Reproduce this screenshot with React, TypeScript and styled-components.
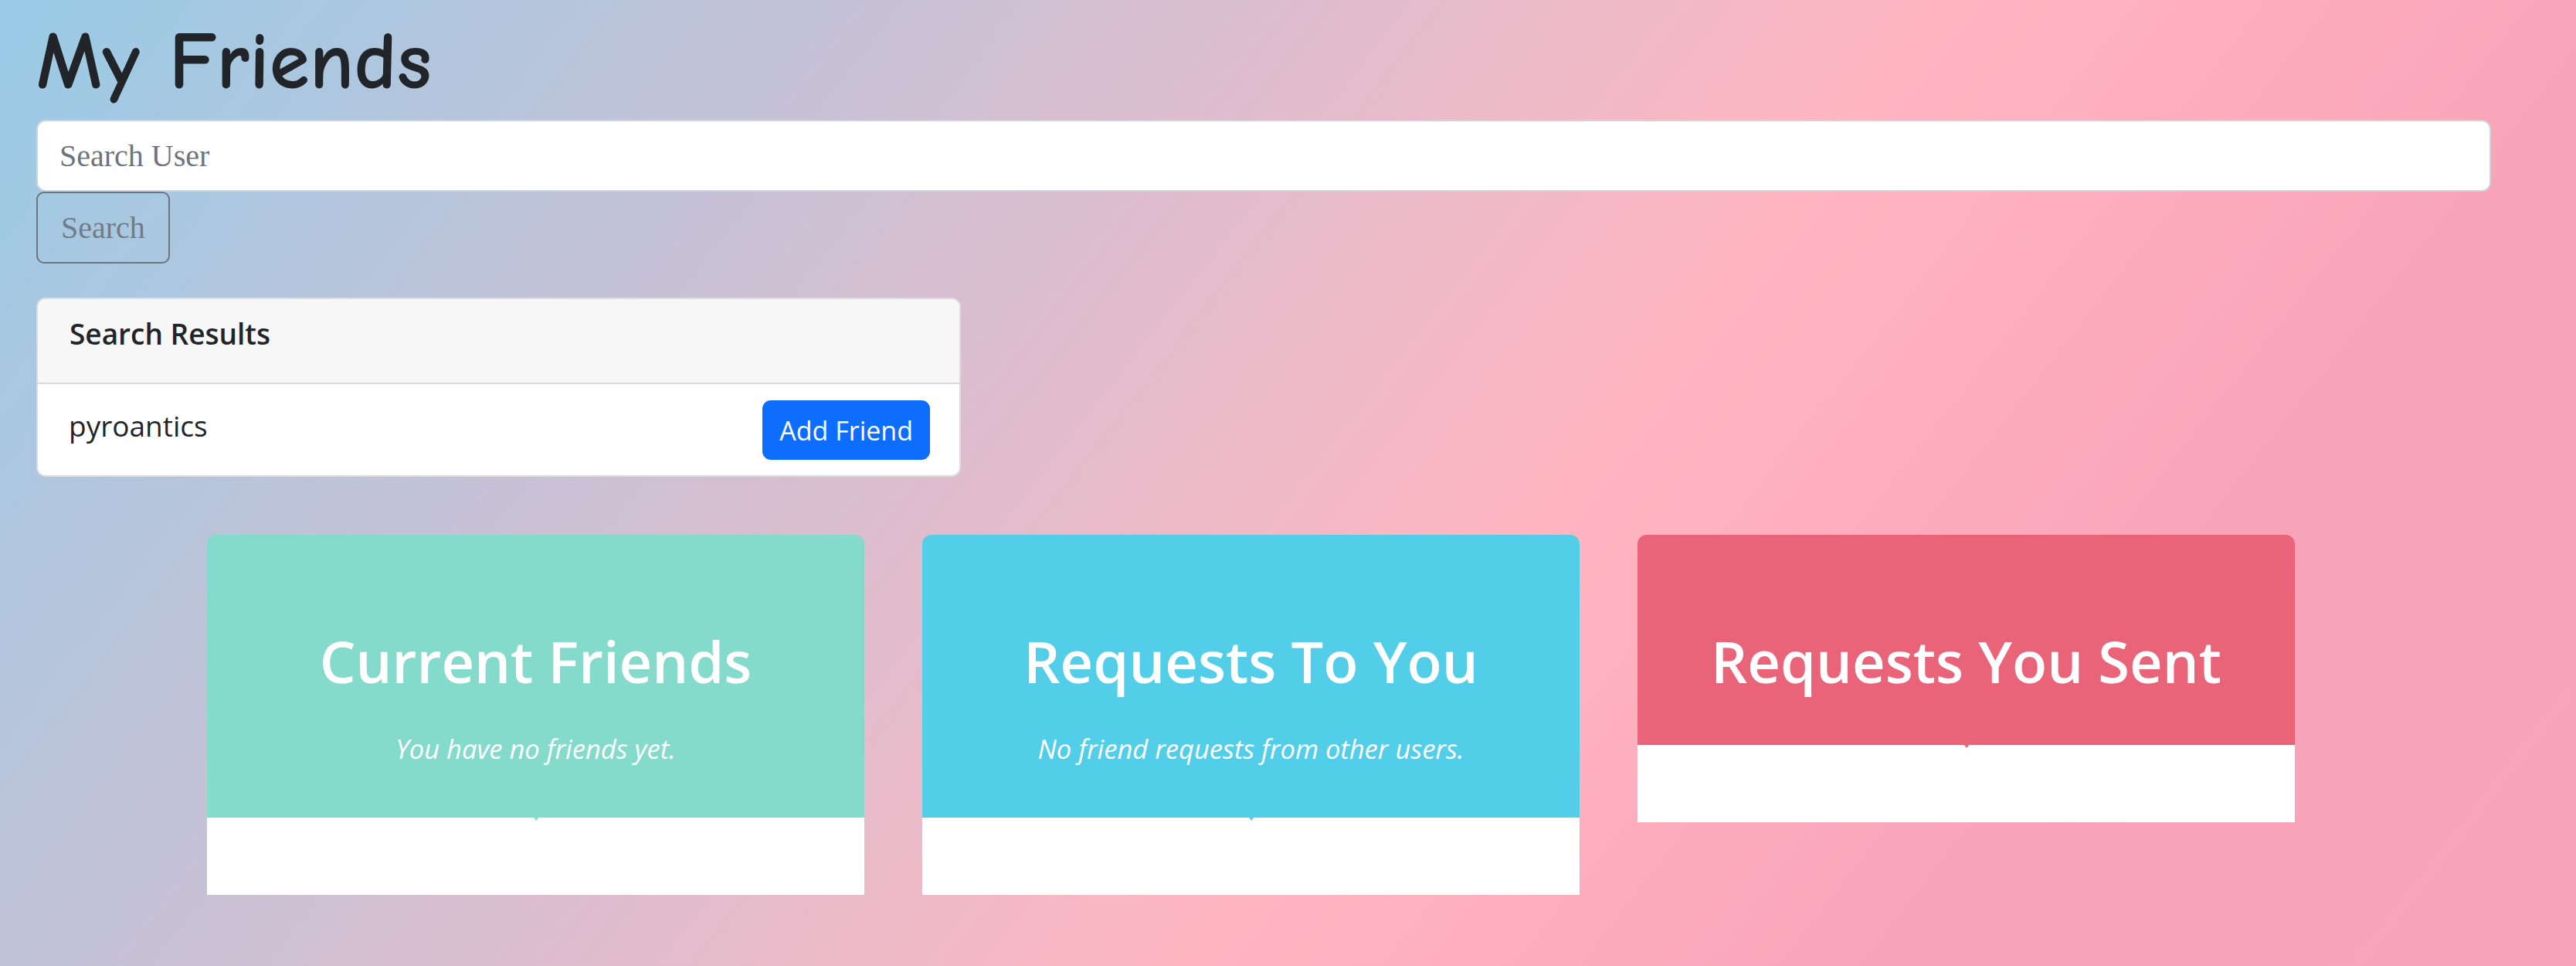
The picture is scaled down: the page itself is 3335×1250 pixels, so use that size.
import React from 'react'
import styled, { createGlobalStyle } from 'styled-components'

const GlobalStyle = createGlobalStyle`
  html, body {
    margin: 0;
    padding: 0;
  }
  body {
    font-family: 'Open Sans', 'Noto Sans', sans-serif;
    color: #212529;
  }
  * {
    box-sizing: border-box;
  }
`

const lists = [
  { title: 'Current Friends', empty: 'You have no friends yet.', color: '#84dacb' },
  { title: 'Requests To You', empty: 'No friend requests from other users.', color: '#53cee8' },
  { title: 'Requests You Sent', empty: '', color: '#ea6479' },
]

const searchResults = ['pyroantics']

export default function App() {
  return (
    <>
      <GlobalStyle />
      <Page>
        <Title>My Friends</Title>

        <SearchForm onSubmit={e => e.preventDefault()}>
          <SearchInput type="text" placeholder="Search User" />
          <SearchButton type="submit">Search</SearchButton>
        </SearchForm>

        <ResultsCard>
          <ResultsHeader>Search Results</ResultsHeader>
          {searchResults.map(name => (
            <ResultRow key={name}>
              <UserName>{name}</UserName>
              <AddButton>Add Friend</AddButton>
            </ResultRow>
          ))}
        </ResultsCard>

        <ListRow>
          {lists.map(({ title, empty, color }) => (
            <ListCard key={title}>
              <ListHeader $color={color}>
                <ListTitle>{title}</ListTitle>
                {empty && <EmptyText>{empty}</EmptyText>}
              </ListHeader>
              <ListBody />
            </ListCard>
          ))}
        </ListRow>
      </Page>
    </>
  )
}

const Page = styled.main`
  min-height: 1250px;
  padding: 0 110px 40px 47px;
  background: linear-gradient(
    128deg,
    #98cbe7 0%,
    #ffb6c1 58%,
    #f9a3b9 80%,
    #f8a5ba 100%
  );
`

const Title = styled.h1`
  margin: 0;
  font-family: 'Comic Sans MS', 'Comic Neue', 'Lato', sans-serif;
  font-size: 106px;
  font-weight: 700;
  line-height: 160px;
  height: 155px;
  color: #212529;
`

const SearchForm = styled.form`
  display: flex;
  flex-direction: column;
  align-items: flex-start;
`

const SearchInput = styled.input`
  display: block;
  width: 100%;
  height: 93px;
  padding: 0 28px;
  border: 2px solid #ced4da;
  border-radius: 12px;
  background: #fff;
  font-family: 'Liberation Serif', serif;
  font-size: 40px;
  color: #212529;
  outline: none;

  &::placeholder {
    color: #6c757d;
  }
`

const SearchButton = styled.button`
  height: 93px;
  padding: 0 30px;
  border: 2px solid #6c757d;
  border-radius: 10px;
  background: transparent;
  font-family: 'Liberation Serif', serif;
  font-size: 40px;
  color: #737b84;
  cursor: pointer;
`

const ResultsCard = styled.section`
  width: 1197px;
  margin-top: 44px;
  border: 2px solid #dcdcdc;
  border-radius: 12px;
  background: #fff;
  overflow: hidden;
`

const ResultsHeader = styled.div`
  height: 110px;
  padding: 19px 41px 0;
  border-bottom: 2px solid #d9d9d9;
  background: #f7f7f7;
  font-size: 37px;
  font-weight: 600;
  line-height: 52px;
  color: #212529;
`

const ResultRow = styled.div`
  display: flex;
  justify-content: space-between;
  align-items: flex-start;
  height: 118px;
  padding: 21px 38px 0 40px;
`

const UserName = styled.span`
  font-size: 37px;
  line-height: 66px;
  color: #212529;
`

const AddButton = styled.button`
  height: 77px;
  padding: 0 22px;
  border: none;
  border-radius: 11px;
  background: #0d6efd;
  font-family: 'Open Sans', sans-serif;
  font-size: 34px;
  color: #fff;
  cursor: pointer;
`

const ListRow = styled.div`
  display: flex;
  gap: 75px;
  margin: 75px 0 0 221px;
`

const ListCard = styled.article`
  display: flex;
  flex-direction: column;
  width: 851px;
`

const ListHeader = styled.div<{ $color: string }>`
  position: relative;
  padding: 119px 20px 64px;
  border-radius: 12px 12px 0 0;
  background: ${p => p.$color};
  color: #fff;
  text-align: center;

  &::after {
    content: '';
    position: absolute;
    top: 100%;
    left: 50%;
    transform: translateX(-50%);
    border-left: 3px solid transparent;
    border-right: 3px solid transparent;
    border-top: 4px solid ${p => p.$color};
  }
`

const ListTitle = styled.h2`
  margin: 0;
  font-size: 74px;
  font-weight: 600;
  line-height: 89px;
`

const EmptyText = styled.p`
  margin: 44px 0 0;
  font-size: 34.5px;
  font-style: italic;
  line-height: 50px;
`

const ListBody = styled.div`
  height: 100px;
  background: #fff;
`
